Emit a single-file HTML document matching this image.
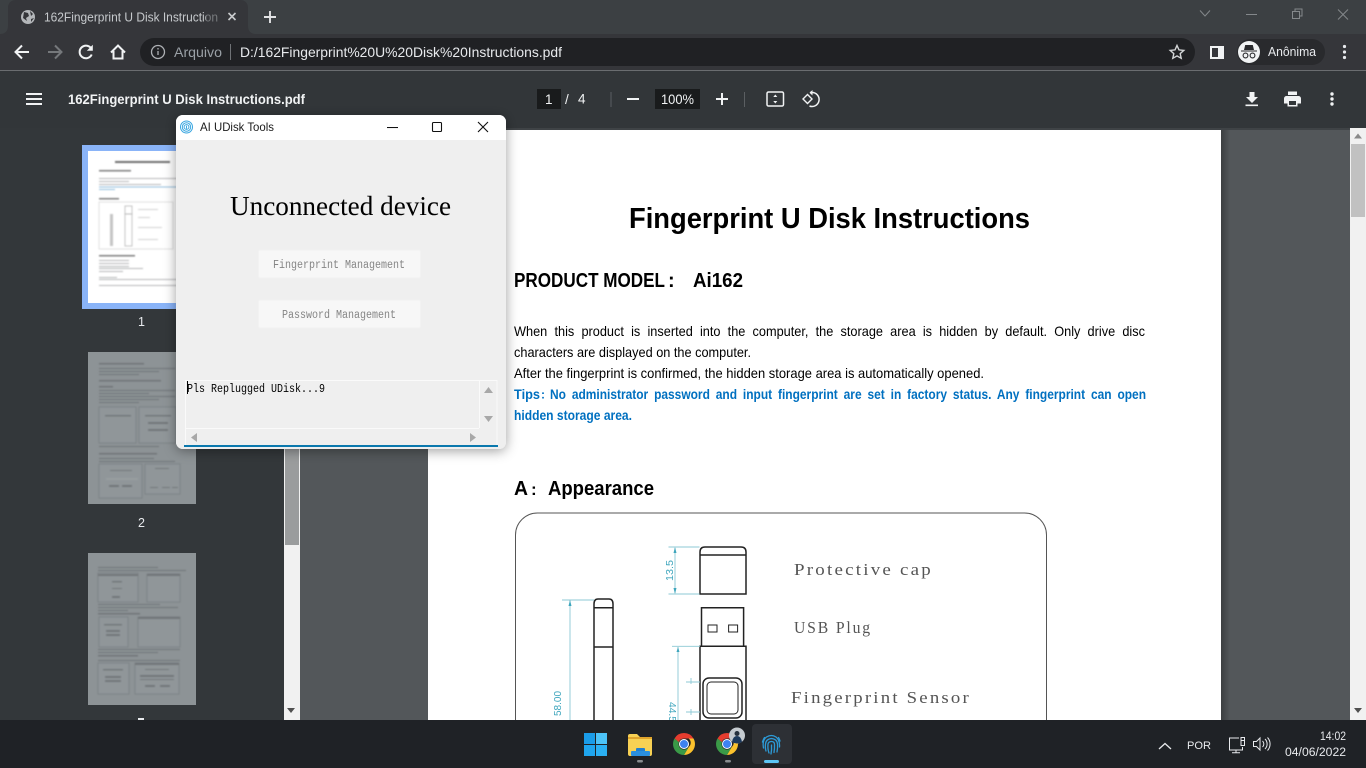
<!DOCTYPE html>
<html lang="pt"><head><meta charset="utf-8"><title>162Fingerprint U Disk Instructions.pdf</title>
<style>
html,body{margin:0;padding:0;width:1366px;height:768px;overflow:hidden;background:#525659}
svg{display:block;position:absolute;left:0;top:0}
text{font-family:"Liberation Sans",sans-serif;white-space:pre}
.s{font-family:"Liberation Serif",serif}
.m{font-family:"Liberation Mono",monospace}
</style></head><body>
<svg width="1366" height="768" viewBox="0 0 1366 768" xmlns="http://www.w3.org/2000/svg">
<defs>
<linearGradient id="ps" x1="0" x2="1" y1="0" y2="0"><stop offset="0" stop-color="#000" stop-opacity=".28"/><stop offset="1" stop-color="#000" stop-opacity="0"/></linearGradient>
<filter id="b1" x="-5%" y="-5%" width="110%" height="110%"><feGaussianBlur stdDeviation=".75"/></filter>
<filter id="sh" x="-10%" y="-10%" width="120%" height="125%"><feDropShadow dx="0" dy="2" stdDeviation="6" flood-color="#000" flood-opacity=".38"/></filter>
<clipPath id="dlg"><rect x="176" y="115" width="330" height="334" rx="7"/></clipPath>
<clipPath id="main"><rect x="0" y="0" width="1366" height="720"/></clipPath>
</defs>

<!-- chrome strip -->
<rect width="1366" height="34" fill="#3c4043"/>
<path d="M0 34C5 34 8 31 8 26V8C8 3 11 0 16 0H240C245 0 248 3 248 8V26C248 31 251 34 256 34Z" fill="#35363a"/>
<circle cx="28" cy="17" r="7" fill="#b4b7ba"/>
<path d="M24 12l4 1 1 3-3 2 1 3-4-3zM30 11l3 3-2 2zM31 19l3-1-3 4z" fill="#35363a"/>
<text x="44" y="21.5" font-size="12.5" fill="#c6c9cc" textLength="174" lengthAdjust="spacingAndGlyphs">162Fingerprint U Disk Instruction</text>
<rect x="206" y="8" width="13" height="18" fill="#35363a" opacity=".55"/>
<path d="M228.5 13l7 7m0-7l-7 7" stroke="#c8cacc" stroke-width="1.6" fill="none"/>
<path d="M270 11v12M264 17h12" stroke="#e2e3e5" stroke-width="1.9" fill="none"/>
<path d="M1200 10.5l5 5.500 5-5.500" stroke="#84888b" fill="none"/>
<path d="M1246 14.500h11" stroke="#84888b" fill="none"/>
<path d="M1292.500 11.500h7v7h-7zM1295 11v-2h7v7h-2" stroke="#84888b" fill="none"/>
<path d="M1338 9.500l10 10m0-10l-10 10" stroke="#84888b" fill="none"/>

<!-- toolbar -->
<rect y="34" width="1366" height="37" fill="#35363a"/>
<rect y="70" width="1366" height="1" fill="#6a6d70"/>
<path d="M29 52H16M22 45.500l-6.500 6.500 6.500 6.500" stroke="#f1f3f4" stroke-width="2" fill="none"/>
<path d="M48 52h13M55 45.500l6.500 6.500-6.500 6.500" stroke="#75787b" stroke-width="2" fill="none"/>
<path d="M91.500 49a6.300 6.300 0 1 0 .2 5.500" stroke="#f1f3f4" stroke-width="2" fill="none"/><path d="M92.800 44.800v6h-6z" fill="#f1f3f4"/>
<path d="M111 52.500l7-7 7 7M113.500 51v7.500h9V51" stroke="#f1f3f4" stroke-width="2" fill="none"/>
<rect x="140" y="38" width="1055" height="28" rx="14" fill="#202124"/>
<circle cx="158" cy="52" r="6.500" stroke="#aeb1b5" stroke-width="1.300" fill="none"/><path d="M158 51v4M158 48v1.500" stroke="#aeb1b5" stroke-width="1.300"/>
<text x="174" y="57" font-size="14" fill="#9aa0a6" textLength="48" lengthAdjust="spacingAndGlyphs">Arquivo</text>
<rect x="230" y="44" width="1" height="16" fill="#6f7276"/>
<text x="240" y="57" font-size="14" fill="#e8eaed" textLength="322" lengthAdjust="spacingAndGlyphs">D:/162Fingerprint%20U%20Disk%20Instructions.pdf</text>
<path d="M1177 45.500l2 4.400 4.800.5-3.600 3.200 1 4.700-4.200-2.400-4.200 2.400 1-4.700-3.600-3.200 4.800-.5z" stroke="#d4d6d8" stroke-width="1.400" fill="none"/>
<rect x="1210" y="46" width="14" height="13" fill="#f1f3f4"/><rect x="1212" y="48" width="6" height="9" fill="#35363a"/>
<rect x="1237" y="39" width="88" height="26" rx="13" fill="#292a2d"/>
<circle cx="1249" cy="52" r="11" fill="#f1f3f4"/>
<path d="M1241 50.500h16v1h-16zM1244 50l1.200-5h7.600l1.200 5z" fill="#292a2d"/>
<circle cx="1245.500" cy="55.500" r="2.400" stroke="#292a2d" stroke-width="1.100" fill="none"/><circle cx="1252.500" cy="55.500" r="2.400" stroke="#292a2d" stroke-width="1.100" fill="none"/>
<text x="1268" y="56" font-size="12.500" fill="#e8eaed" textLength="48" lengthAdjust="spacingAndGlyphs">Anônima</text>
<circle cx="1344.500" cy="46.500" r="1.600" fill="#e8eaed"/><circle cx="1344.500" cy="52" r="1.600" fill="#e8eaed"/><circle cx="1344.500" cy="57.500" r="1.600" fill="#e8eaed"/>

<!-- pdf toolbar -->
<rect y="71" width="1366" height="57" fill="#323639"/>
<path d="M26 94h16M26 99h16M26 104h16" stroke="#f1f3f4" stroke-width="2"/>
<text x="68" y="104" font-size="14" font-weight="700" fill="#f1f3f4" textLength="237" lengthAdjust="spacingAndGlyphs">162Fingerprint U Disk Instructions.pdf</text>
<rect x="537" y="89" width="24" height="20" fill="#191b1c"/>
<text x="545" y="104" font-size="13.500" fill="#f1f3f4">1</text>
<text x="565" y="104" font-size="13.500" fill="#f1f3f4">/</text>
<text x="578" y="103.500" font-size="13.500" fill="#f1f3f4">4</text>
<rect x="610.500" y="92" width="1" height="15" fill="#5b5f62"/>
<path d="M627 99h12" stroke="#f1f3f4" stroke-width="2"/>
<rect x="655" y="89" width="45" height="20" fill="#191b1c"/>
<text x="661" y="104" font-size="13.500" fill="#f1f3f4" textLength="33" lengthAdjust="spacingAndGlyphs">100%</text>
<path d="M716 99h12M722 93v12" stroke="#f1f3f4" stroke-width="2"/>
<rect x="744" y="92" width="1" height="15" fill="#5b5f62"/>
<rect x="767" y="92" width="16.500" height="14" rx="1.500" stroke="#f1f3f4" stroke-width="1.500" fill="none"/>
<path d="M775.300 94.500l-2 2.500h4zM775.300 103.500l-2-2.500h4z" fill="#f1f3f4"/>
<path d="M810 92.500h2a7 7 0 1 1-2.500 13.500" stroke="#f1f3f4" stroke-width="1.500" fill="none"/>
<path d="M812.500 90v5.500l-3-2.800z" fill="#f1f3f4"/>
<path d="M803 99l4.500-4.500 4.500 4.500-4.500 4.500z" stroke="#f1f3f4" stroke-width="1.400" fill="none"/>
<path d="M1249.500 92h5v5h3.500l-6 6-6-6h3.500zM1245.500 104.500h12.500v1.600h-12.500z" fill="#f1f3f4"/>
<path d="M1288 91.500h9v3.500h-9zM1286.500 96h12a2.500 2.500 0 0 1 2.500 2.500v5h-3.500v3h-10v-3H1284v-5a2.500 2.500 0 0 1 2.500-2.500zM1289 101v4h7v-4z" fill="#f1f3f4" fill-rule="evenodd"/>
<circle cx="1332" cy="94" r="1.700" fill="#f1f3f4"/><circle cx="1332" cy="99" r="1.700" fill="#f1f3f4"/><circle cx="1332" cy="104" r="1.700" fill="#f1f3f4"/>

<!-- content -->
<g clip-path="url(#main)">
<rect x="0" y="128" width="284" height="592" fill="#33373a"/>
<rect x="284" y="128" width="16" height="592" fill="#f1f1f1"/>
<rect x="285" y="128" width="14" height="417" fill="#9a9c9d"/>
<path d="M287 708h8l-4 5z" fill="#505050"/>
<rect x="300" y="128" width="1050" height="592" fill="#53575a"/>
<rect x="300" y="128" width="1050" height="2" fill="#3f4346"/>
<rect x="1221" y="130" width="9" height="590" fill="url(#ps)"/>
<rect x="1350" y="128" width="16" height="592" fill="#f1f1f1"/>
<rect x="1351" y="144" width="14" height="73" fill="#c1c1c1"/>
<path d="M1354 138.500h8l-4-5z" fill="#8a8a8a"/>
<path d="M1354 708h8l-4 5z" fill="#505050"/>

<!-- thumbs -->
<rect x="82" y="145" width="120" height="164" fill="#8ab4f8"/>
<rect x="88" y="151" width="108" height="152" fill="#fff"/>
<g filter="url(#b1)" fill="#a9abad" opacity=".85">
<rect x="115" y="161" width="55" height="2" fill="#555"/>
<rect x="99" y="170" width="32" height="1.500" fill="#666"/>
<rect x="99" y="178" width="80" height="1"/><rect x="99" y="181" width="30" height="1"/><rect x="99" y="184" width="62" height="1"/>
<rect x="99" y="186.500" width="78" height="1" fill="#7fb3d8"/><rect x="99" y="189" width="16" height="1" fill="#7fb3d8"/>
<rect x="99" y="198" width="20" height="1.500" fill="#666"/>
<rect x="99" y="202" width="74" height="47" fill="none" stroke="#d4d4d4" stroke-width=".8"/>
<rect x="110" y="214" width="3" height="32" fill="#bbb"/>
<rect x="125" y="206" width="7" height="8" fill="none" stroke="#aaa" stroke-width=".8"/>
<rect x="125" y="214" width="7" height="32" fill="none" stroke="#aaa" stroke-width=".8"/>
<rect x="138" y="209" width="20" height="1" fill="#ccc"/><rect x="138" y="217" width="12" height="1" fill="#ccc"/><rect x="138" y="227" width="24" height="1" fill="#ccc"/><rect x="138" y="239" width="20" height="1" fill="#ccc"/>
<rect x="99" y="255" width="36" height="1.500" fill="#666"/>
<rect x="99" y="260" width="30" height="1"/><rect x="99" y="263" width="30" height="1"/><rect x="99" y="266" width="30" height="1"/><rect x="99" y="268" width="44" height="1"/><rect x="99" y="271" width="24" height="1"/>
<rect x="99" y="277" width="18" height="1"/><rect x="99" y="279" width="78" height="1"/><rect x="99" y="285" width="78" height="1"/>
</g>
<text x="138" y="326" font-size="12.500" fill="#e8eaed">1</text>

<rect x="88" y="352" width="108" height="152" fill="#8d9396"/>
<g filter="url(#b1)" fill="#63686b" opacity=".7">
<rect x="99" y="363" width="45" height="1.500"/><rect x="99" y="368" width="76" height="1"/><rect x="99" y="371" width="60" height="1"/><rect x="99" y="374" width="40" height="1"/>
<rect x="99" y="380" width="62" height="1.500"/><rect x="99" y="386" width="14" height="1.500"/>
<rect x="99" y="390" width="76" height="1"/><rect x="99" y="393" width="50" height="1"/><rect x="99" y="396" width="76" height="1"/><rect x="99" y="399" width="60" height="1"/><rect x="99" y="402" width="40" height="1"/>
<rect x="99" y="407" width="37" height="36" fill="#92989b" stroke="#70757a" stroke-width=".8"/>
<rect x="139" y="407" width="37" height="36" fill="#92989b" stroke="#70757a" stroke-width=".8"/>
<rect x="105" y="415" width="26" height="1.500"/><rect x="145" y="415" width="26" height="1.500"/>
<rect x="148" y="422" width="20" height="2"/><rect x="148" y="429" width="20" height="2"/>
<rect x="99" y="446" width="60" height="1"/>
<rect x="99" y="453" width="58" height="1.500"/><rect x="99" y="458" width="55" height="1"/><rect x="99" y="461" width="76" height="1"/>
<rect x="99" y="464" width="43" height="34" fill="#92989b" stroke="#70757a" stroke-width=".8"/>
<rect x="145" y="464" width="35" height="30" fill="#92989b" stroke="#70757a" stroke-width=".8"/>
<rect x="110" y="470" width="22" height="1"/><rect x="106" y="478" width="32" height="2" fill="#9da3a6"/><rect x="109" y="485" width="10" height="2"/><rect x="122" y="485" width="10" height="2"/>
<rect x="155" y="468" width="14" height="1"/><rect x="150" y="487" width="8" height="1"/><rect x="162" y="487" width="8" height="1"/><rect x="172" y="487" width="6" height="1"/>
</g>
<text x="138" y="527" font-size="12.500" fill="#e8eaed">2</text>

<rect x="88" y="553" width="108" height="152" fill="#8d9396"/>
<g filter="url(#b1)" fill="#63686b" opacity=".7">
<rect x="98" y="567" width="60" height="1"/><rect x="98" y="570" width="88" height="1"/>
<rect x="98" y="573" width="40" height="29" fill="#92989b" stroke="#70757a" stroke-width=".8"/>
<rect x="147" y="574" width="33" height="28" fill="#92989b" stroke="#70757a" stroke-width=".8"/>
<rect x="98" y="574" width="40" height="2"/><rect x="147" y="574" width="33" height="2"/>
<rect x="112" y="581" width="10" height="1.500"/><rect x="112" y="588" width="10" height="1"/><rect x="112" y="596" width="8" height="2"/>
<rect x="98" y="604" width="62" height="1"/><rect x="98" y="607" width="80" height="1"/><rect x="98" y="610" width="30" height="1"/>
<rect x="98" y="613" width="42" height="1.500"/>
<rect x="99" y="617" width="29" height="30" fill="#92989b" stroke="#70757a" stroke-width=".8"/>
<rect x="138" y="617" width="42" height="30" fill="#92989b" stroke="#70757a" stroke-width=".8"/>
<rect x="138" y="617" width="42" height="2"/>
<rect x="104" y="624" width="18" height="1.500"/><rect x="106" y="630" width="14" height="2"/><rect x="106" y="634" width="14" height="2"/>
<rect x="98" y="649" width="82" height="1"/><rect x="98" y="652" width="60" height="1"/><rect x="98" y="655" width="40" height="1.500"/><rect x="98" y="660" width="82" height="1"/>
<rect x="98" y="663" width="31" height="31" fill="#92989b" stroke="#70757a" stroke-width=".8"/>
<rect x="135" y="663" width="44" height="31" fill="#92989b" stroke="#70757a" stroke-width=".8"/>
<rect x="135" y="663" width="44" height="2"/>
<rect x="103" y="669" width="20" height="1.500"/><rect x="105" y="676" width="16" height="2"/><rect x="105" y="680" width="16" height="2"/>
<rect x="145" y="669" width="24" height="1"/><rect x="140" y="675" width="34" height="2"/><rect x="140" y="679" width="34" height="1"/><rect x="145" y="685" width="10" height="2"/><rect x="160" y="685" width="10" height="2"/>
</g>
<rect x="138" y="718" width="6" height="2" fill="#e8eaed"/>

<!-- pdf page -->
<rect x="428" y="130" width="793" height="600" fill="#fff"/>
<text x="629" y="228" font-size="29" font-weight="700" fill="#000" textLength="401" lengthAdjust="spacingAndGlyphs">Fingerprint U Disk Instructions</text>
<text x="514" y="287" font-size="20" font-weight="700" fill="#000" textLength="151" lengthAdjust="spacingAndGlyphs">PRODUCT MODEL</text>
<text x="668" y="287" font-size="20" font-weight="700" fill="#000">:</text>
<text x="693" y="287" font-size="20" font-weight="700" fill="#000" textLength="50" lengthAdjust="spacingAndGlyphs">Ai162</text>
<text x="514" y="336" font-size="14" fill="#000" word-spacing="4" textLength="631" lengthAdjust="spacingAndGlyphs">When this product is inserted into the computer, the storage area is hidden by default. Only drive disc</text>
<text x="514" y="357" font-size="14" fill="#000" textLength="237" lengthAdjust="spacingAndGlyphs">characters are displayed on the computer.</text>
<text x="514" y="378" font-size="14" fill="#000" textLength="470" lengthAdjust="spacingAndGlyphs">After the fingerprint is confirmed, the hidden storage area is automatically opened.</text>
<text x="514" y="399" font-size="14" font-weight="700" fill="#0070c0" textLength="26" lengthAdjust="spacingAndGlyphs">Tips</text>
<text x="541" y="398.500" font-size="12" font-weight="700" fill="#0070c0">:</text>
<text x="550" y="399" font-size="14" font-weight="700" fill="#0070c0" word-spacing="3" textLength="596" lengthAdjust="spacingAndGlyphs">No administrator password and input fingerprint are set in factory status. Any fingerprint can open</text>
<text x="514" y="420" font-size="14" font-weight="700" fill="#0070c0" textLength="118" lengthAdjust="spacingAndGlyphs">hidden storage area.</text>
<text x="514" y="495" font-size="20" font-weight="700" fill="#000" textLength="14" lengthAdjust="spacingAndGlyphs">A</text>
<text x="531" y="495" font-size="17" font-weight="700" fill="#000">:</text>
<text x="548" y="495" font-size="20" font-weight="700" fill="#000" textLength="106" lengthAdjust="spacingAndGlyphs">Appearance</text>

<!-- diagram -->
<rect x="515.500" y="513" width="531" height="280" rx="22" fill="none" stroke="#555" stroke-width="1"/>
<g fill="none" stroke="#222" stroke-width="1.500">
<path d="M700 594v-42q0-5 5-5h36q5 0 5 5v42zM700 555h46" />
<path d="M594 725V604q0-5 4-5h11q4 0 4 5v121M594 607.700h19M594 647h19"/>
<path d="M701.500 646.300v-38.600h42.100v38.600"/>
<rect x="708" y="625" width="9" height="7" stroke-width="1"/><rect x="728.600" y="625" width="9" height="7" stroke-width="1"/>
<path d="M700 725v-78.700h46V725"/>
<rect x="703" y="678" width="39" height="40" rx="6"/>
<rect x="707" y="682" width="31" height="32" rx="4" stroke-width="1"/>
</g>
<g fill="none" stroke="#8cc8d4" stroke-width=".9">
<path d="M668.500 547h31M668.500 594h31M675 548v45"/>
<path d="M562 600h32M570 600v125"/>
<path d="M672 646.300h28M678 647v78"/>
<path d="M686 682h14M691 678v6M686 712h14M691 709v6"/>
</g>
<path d="M673.500 553l1.500-6 1.500 6zM673.500 588l1.500 6 1.500-6zM568.500 606l1.500-6 1.500 6zM676.500 652l1.500-5 1.500 5z" fill="#3fa6bd"/>
<text transform="translate(673 581) rotate(-90)" font-size="10.500" fill="#3fa6bd" textLength="21" lengthAdjust="spacingAndGlyphs">13.5</text>
<text transform="translate(561 716) rotate(-90)" font-size="10.500" fill="#3fa6bd" textLength="25" lengthAdjust="spacingAndGlyphs">58.00</text>
<text transform="translate(669 702) rotate(90)" font-size="10.500" fill="#3fa6bd" textLength="20" lengthAdjust="spacingAndGlyphs">44.5</text>
<text class="s" x="794" y="575" font-size="17" letter-spacing="2" fill="#555" textLength="139" lengthAdjust="spacingAndGlyphs">Protective cap</text>
<text class="s" x="794" y="633" font-size="17" letter-spacing="2" fill="#555" textLength="78" lengthAdjust="spacingAndGlyphs">USB Plug</text>
<text class="s" x="791" y="703" font-size="17" letter-spacing="2" fill="#555" textLength="180" lengthAdjust="spacingAndGlyphs">Fingerprint Sensor</text>
</g>

<!-- dialog -->
<rect x="176" y="115" width="330" height="334" rx="7" fill="#efefef" filter="url(#sh)"/>
<g clip-path="url(#dlg)">
<rect x="176" y="115" width="330" height="25" fill="#fff"/>
<rect x="176" y="140" width="330" height="309" fill="#efefef"/>
<g fill="none" stroke="#3aa6e0" stroke-width="1">
<circle cx="186.500" cy="127" r="6"/><circle cx="186.500" cy="127" r="4.200"/><circle cx="186.500" cy="127" r="2.400"/><path d="M186.500 125.800v3"/>
</g>
<text x="200" y="131" font-size="12" fill="#1a1a1a" textLength="74" lengthAdjust="spacingAndGlyphs">AI UDisk Tools</text>
<path d="M387 127.500h11" stroke="#111" stroke-width="1.100"/>
<rect x="432.500" y="122.500" width="9" height="9" rx="1" fill="none" stroke="#111" stroke-width="1.100"/>
<path d="M478 122l10 10m0-10l-10 10" stroke="#111" stroke-width="1.100"/>
<text class="s" x="230" y="215" font-size="27" fill="#000" textLength="221" lengthAdjust="spacingAndGlyphs">Unconnected device</text>
<rect x="258.500" y="250" width="162" height="28" rx="2" fill="#f7f7f7" stroke="#f2f2f2"/>
<rect x="258.500" y="300" width="162" height="28" rx="2" fill="#f7f7f7" stroke="#f2f2f2"/>
<text class="m" x="273" y="268" font-size="11.500" fill="#858585" textLength="132" lengthAdjust="spacingAndGlyphs">Fingerprint Management</text>
<text class="m" x="282" y="318" font-size="11.500" fill="#858585" textLength="114" lengthAdjust="spacingAndGlyphs">Password Management</text>
<path d="M185.500 446V380.500h311.500V446" fill="none" stroke="#fafafa"/>
<path d="M185 428.500h294M479.500 381v47" stroke="#fafafa" fill="none"/>
<rect x="184" y="445" width="314" height="2" fill="#0a78ad"/>
<text class="m" x="187" y="392" font-size="11.500" fill="#000" textLength="138" lengthAdjust="spacingAndGlyphs">Pls Replugged UDisk...9</text>
<rect x="187" y="381" width="1" height="13" fill="#000"/>
<path d="M484 393h9l-4.500-6zM484 416h9l-4.500 6zM197 433v9l-6-4.500zM470 433v9l6-4.500z" fill="#a8a8a8"/>
</g>

<!-- taskbar -->
<rect y="720" width="1366" height="48" fill="#1f2226"/>
<rect x="752" y="724" width="40" height="40" rx="4" fill="#2d3035"/>
<rect x="764" y="760" width="15" height="3" rx="1.500" fill="#5cc5f5"/>
<g>
<rect x="584" y="733" width="11" height="11" fill="#1a9ce8"/><rect x="596" y="733" width="11" height="11" fill="#4cc3f7"/>
<rect x="584" y="745" width="11" height="11" fill="#1fa5ee"/><rect x="596" y="745" width="11" height="11" fill="#2bb0f2"/>
</g>
<path d="M628 736q0-2 2-2h7l3 3h10q2 0 2 2v15q0 2-2 2h-20q-2 0-2-2z" fill="#f7d154"/>
<path d="M628 737h24v2h-24z" fill="#e0a52c"/>
<rect x="636" y="748" width="9" height="8" rx="1" fill="#1f7fd1" />
<rect x="631" y="751" width="19" height="5" rx="1" fill="#2a8fde"/>
<rect x="637" y="760" width="6" height="2.500" rx="1.200" fill="#8a8d90"/>
<rect x="725" y="760" width="6" height="2.500" rx="1.200" fill="#8a8d90"/>
<g>
<path d="M684 733a11 11 0 0 1 9.500 5.500H684a5.500 5.500 0 0 0-5.200 3.600L674.500 738.500A11 11 0 0 1 684 733z" fill="#e53c2e"/>
<path d="M693.500 738.500A11 11 0 0 1 684 755l4.700-8a5.500 5.500 0 0 0 0-8.500z" fill="#fbc22d"/>
<path d="M674.500 738.500A11 11 0 0 0 684 755l4.700-8a5.500 5.500 0 0 1-9.800-4.900z" fill="#3a9a47"/>
<circle cx="684" cy="744" r="5" fill="#fff"/><circle cx="684" cy="744" r="4" fill="#3e82f1"/>
</g>
<g transform="translate(43 0)">
<path d="M684 733a11 11 0 0 1 9.500 5.500H684a5.500 5.500 0 0 0-5.200 3.600L674.500 738.500A11 11 0 0 1 684 733z" fill="#e53c2e"/>
<path d="M693.500 738.500A11 11 0 0 1 684 755l4.700-8a5.500 5.500 0 0 0 0-8.500z" fill="#fbc22d"/>
<path d="M674.500 738.500A11 11 0 0 0 684 755l4.700-8a5.500 5.500 0 0 1-9.800-4.900z" fill="#3a9a47"/>
<circle cx="684" cy="744" r="5" fill="#fff"/><circle cx="684" cy="744" r="4" fill="#3e82f1"/>
</g>
<circle cx="737" cy="735.500" r="8" fill="#c5cbd0"/>
<path d="M732 742q1-6 5-6t5 6q-5 3-10 0z" fill="#1d3a5c"/><circle cx="737" cy="733.500" r="2.500" fill="#27323f"/>
<g fill="none" stroke="#2d9ad6" stroke-width="1.300" stroke-linecap="round">
<path d="M763.500 748q-1.500-8 3-11 5-3 9.500 0 4 3 3.500 10"/>
<path d="M766 751q-1-3-.5-7 .5-5 6-5.500 5.500.5 6 5.500.3 4-.5 8"/>
<path d="M769 753q-1.500-4-1-9 .5-2.500 3.500-2.500t3 3q.2 4-.5 8"/>
<path d="M771.500 745q.3 5-.5 9"/>
<path d="M762.500 742q1-3 2-4.500M780 741q-.6-2-1.500-3.500"/>
</g>
<path d="M1159 749l6-5.500 6 5.500" stroke="#e8eaed" stroke-width="1.300" fill="none"/>
<text x="1187" y="749" font-size="11" fill="#e8eaed" textLength="24" lengthAdjust="spacingAndGlyphs">POR</text>
<path d="M1239 738h-9.500v12h13v-3M1236 750v2.500M1232 752.800h8M1241 737.500h3.500v8h-3.500zM1241 740.500h3.500" stroke="#e8eaed" fill="none"/>
<path d="M1253.500 741.500h3l3.500-3.500v12l-3.500-3.500h-3zM1262.500 741a4 4 0 0 1 0 6M1265 739a7 7 0 0 1 0 10M1267.500 737.500a9.500 9.500 0 0 1 0 13" stroke="#e8eaed" fill="none"/>
<text x="1320" y="740" font-size="11.500" fill="#e8eaed" textLength="26" lengthAdjust="spacingAndGlyphs">14:02</text>
<text x="1285" y="756" font-size="11.500" fill="#e8eaed" textLength="61" lengthAdjust="spacingAndGlyphs">04/06/2022</text>
</svg>
</body></html>
